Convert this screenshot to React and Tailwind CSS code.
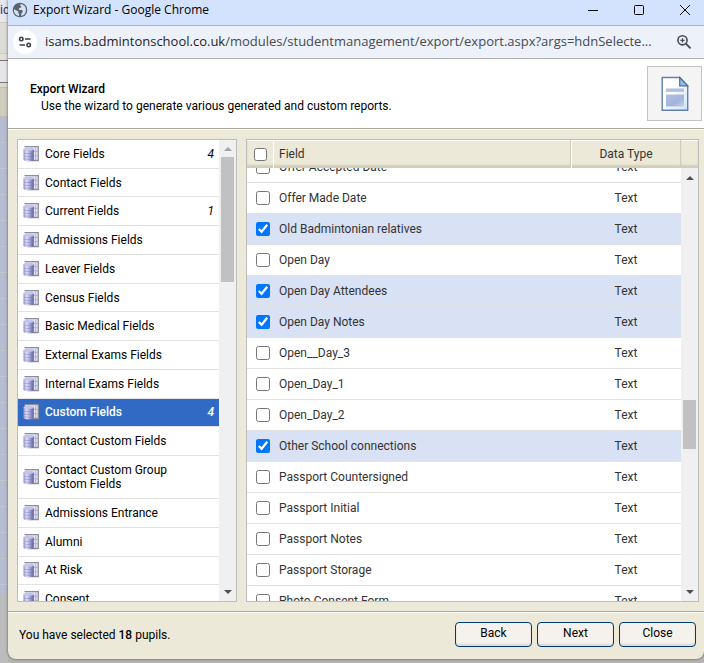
import { useLayoutEffect, useRef, useState } from 'react'

const categories = [
  { name: 'Core Fields', count: 4 },
  { name: 'Contact Fields' },
  { name: 'Current Fields', count: 1 },
  { name: 'Admissions Fields' },
  { name: 'Leaver Fields' },
  { name: 'Census Fields' },
  { name: 'Basic Medical Fields' },
  { name: 'External Exams Fields' },
  { name: 'Internal Exams Fields' },
  { name: 'Custom Fields', count: 4 },
  { name: 'Contact Custom Fields' },
  { name: 'Contact Custom Group Custom Fields', tall: true },
  { name: 'Admissions Entrance' },
  { name: 'Alumni' },
  { name: 'At Risk' },
  { name: 'Consent' },
]

const fields = [
  'Offer Accepted Date',
  'Offer Made Date',
  'Old Badmintonian relatives',
  'Open Day',
  'Open Day Attendees',
  'Open Day Notes',
  'Open__Day_3',
  'Open_Day_1',
  'Open_Day_2',
  'Other School connections',
  'Passport Countersigned',
  'Passport Initial',
  'Passport Notes',
  'Passport Storage',
  'Photo Consent Form',
]

function GlobeIcon() {
  return (
    <svg viewBox="0 0 16 16" className="h-4 w-4 shrink-0" aria-hidden="true">
      <circle cx="8" cy="8" r="7.3" fill="#5f6368" />
      <path
        d="M8.8 2 8 3.4 9.3 4.2 9 5.6 7 6.3 6.8 7.8 10 8 11 9.7 9.6 11 9 13.9A6 6 0 0 0 13.9 8 6 6 0 0 0 8.8 2ZM2 7.2 5 8.8 6.3 9.4 6.2 11 7.2 12 7 14A6 6 0 0 1 2 7.2Z"
        fill="#d3e2fd"
      />
    </svg>
  )
}

function TuneIcon() {
  return (
    <svg viewBox="0 0 14 14" className="h-3.5 w-3.5" fill="none" stroke="#3c4043" strokeWidth="1.6" aria-hidden="true">
      <circle cx="3.3" cy="4" r="1.7" />
      <path d="M7 4h5.5M1.5 10h5.5" />
      <circle cx="10.7" cy="10" r="1.7" />
    </svg>
  )
}

function ZoomIcon() {
  return (
    <svg viewBox="0 0 16 16" className="h-4 w-4" fill="none" stroke="#474a4f" aria-hidden="true">
      <circle cx="6.5" cy="6.3" r="4.6" strokeWidth="1.6" />
      <path d="m9.9 9.7 4.6 4.6" strokeWidth="1.9" />
      <path d="M6.5 4.2v4.2M4.4 6.3h4.2" strokeWidth="1.3" />
    </svg>
  )
}

function DatabaseIcon() {
  return (
    <svg viewBox="0 0 16 16" className="h-4 w-4 shrink-0" aria-hidden="true">
      <defs>
        <linearGradient id="drum">
          <stop offset="0" stopColor="#9a9aca" />
          <stop offset="0.3" stopColor="#dedefa" />
          <stop offset="0.6" stopColor="#a9a9dc" />
          <stop offset="1" stopColor="#5c5c98" />
        </linearGradient>
      </defs>
      <path d="M1.5 .7h13.8v13.8H8" fill="#e6e6fb" stroke="#8e8e98" strokeWidth="1.3" />
      <path d="M12.7 1.5v12.5M10 5.3h5M10 9.8h5" stroke="#b0b0cc" />
      <path d="M.5 3.4C.5 1.8 10.8 1.8 10.8 3.4v10.4c0 2.2-10.3 2.2-10.3 0Z" fill="url(#drum)" />
      <path
        d="M.5 6.6c1 1.3 9.3 1.3 10.3 0M.5 9.5c1 1.3 9.3 1.3 10.3 0M.5 12.3c1 1.3 9.3 1.3 10.3 0"
        fill="none"
        stroke="#7f7fb8"
        strokeWidth="0.5"
      />
      <ellipse cx="5.6" cy="3.4" rx="5" ry="1.3" fill="#c4c4ec" />
    </svg>
  )
}

function DocumentIcon() {
  return (
    <svg viewBox="0 0 28 36" className="h-9 w-7" aria-hidden="true">
      <defs>
        <linearGradient id="sheet" x2="1" y2="1">
          <stop offset="0.4" stopColor="#ffffff" />
          <stop offset="1" stopColor="#cfe3f7" />
        </linearGradient>
        <linearGradient id="block" x2="1" y2="1">
          <stop offset="0" stopColor="#b4bfdf" />
          <stop offset="0.6" stopColor="#a3b4dc" />
          <stop offset="1" stopColor="#c5cdea" />
        </linearGradient>
      </defs>
      <path d="M1.2 1.5h17.5l8 8.4v24.3H1.2Z" fill="url(#sheet)" stroke="#6380ac" strokeWidth="1.4" />
      <path d="M18.7 1.5v8.4h8Z" fill="#8dc0e6" stroke="#4f6f9c" strokeWidth="1.2" />
      <path d="M5 12.5h18v3.4H5Z" fill="#b3bfde" />
      <path d="M5 18.5h18v12H5Z" fill="url(#block)" />
    </svg>
  )
}

function Arrow({ up, color }) {
  return (
    <svg viewBox="0 0 8 4" className="h-1 w-2 shrink-0" fill={color} aria-hidden="true">
      <path d={up ? 'M0 4 4 0l4 4Z' : 'm0 0 4 4 4-4Z'} />
    </svg>
  )
}

function Button({ children }) {
  return (
    <button
      type="button"
      className="h-[25px] w-[77px] rounded-[4px] border border-[#003c74] bg-[#f5f2ee] pb-1 text-center leading-4 shadow-[inset_0_-2px_2px_#dcd8d0]"
    >
      {children}
    </button>
  )
}

// Sliver of the page that sits behind the popup
function PageBehind() {
  return (
    <div className="flex w-2 shrink-0 flex-col overflow-hidden bg-[#bcbcbc] text-xs leading-5 text-[#303060]">
      <div className="h-[22px] shrink-0 bg-[#e7e7ed]">ic</div>
      <div className="h-8 shrink-0 border-y border-[#cfccbc] bg-[#dcdbd6]" />
      <div className="h-1.5 shrink-0 bg-[#e2e0d5]" />
      <div className="h-[23px] shrink-0 border-y border-[#77777b] bg-[#e6e6e8]" />
      <div className="h-1 shrink-0 bg-[#dcdacc]" />
      <div className="h-[30px] shrink-0 border-y border-[#c2bfae] bg-[#d0cdbf]" />
      <div className="h-[476px] shrink-0 bg-[repeating-linear-gradient(#b6bdd3_0_25px,#c3c5cc_25px_26px)]" />
    </div>
  )
}

export default function App() {
  const [active, setActive] = useState('Custom Fields')
  const [checked, setChecked] = useState([
    'Old Badmintonian relatives',
    'Open Day Attendees',
    'Open Day Notes',
    'Other School connections',
  ])
  const scroller = useRef(null)

  useLayoutEffect(() => {
    scroller.current.scrollTop = 16
  }, [])

  const toggle = (name) =>
    setChecked((list) => (list.includes(name) ? list.filter((n) => n !== name) : [...list, name]))

  return (
    <div className="flex h-screen overflow-hidden bg-[#b4b4b4] font-['Roboto',sans-serif] text-[12px] text-black">
      <PageBehind />

      <div className="mb-1 flex min-w-0 flex-1 flex-col overflow-hidden rounded-b-lg bg-[#ece9d8] shadow-[0_0_3px_#555]">
        <div className="flex h-[25px] shrink-0 items-center bg-[#d3e2fd] pb-1.5 pl-1 pr-3.5 font-['Open_Sans',sans-serif]">
          <GlobeIcon />
          <span className="ml-[5px] text-[12px]">Export Wizard - Google Chrome</span>
          <div className="ml-auto flex items-center gap-9">
            <button type="button" aria-label="Minimize">
              <svg viewBox="0 0 10 10" className="h-2.5 w-2.5" stroke="#000"><path d="M0 5.5h10" /></svg>
            </button>
            <button type="button" aria-label="Maximize">
              <svg viewBox="0 0 10 10" className="h-2.5 w-2.5" fill="none" stroke="#000"><rect x=".5" y=".5" width="9" height="9" rx="1" /></svg>
            </button>
            <button type="button" aria-label="Close window">
              <svg viewBox="0 0 10 10" className="h-2.5 w-2.5" stroke="#000"><path d="m0 0 10 10M10 0 0 10" /></svg>
            </button>
          </div>
        </div>

        <div className="flex h-[34px] shrink-0 items-center border-y border-[#aeb0b4] bg-[#edf1fa] pl-[5px] pr-3">
          <button type="button" aria-label="View site information" className="flex h-6 w-6 shrink-0 items-center justify-center rounded-full bg-white">
            <TuneIcon />
          </button>
          <span className="ml-2 min-w-0 flex-1 truncate font-['Open_Sans',sans-serif] text-[13px] text-[#474a4f]">
            <span className="text-[#1f1f1f]">isams.badmintonschool.co.uk</span>
            /modules/studentmanagement/export/export.aspx?args=hdnSelecte...
          </span>
          <button type="button" aria-label="Zoom">
            <ZoomIcon />
          </button>
        </div>

        <header className="flex h-[70px] shrink-0 items-center justify-between border-b border-[#aca899] bg-white pl-[22px] pr-0.5">
          <div className="pt-2 leading-[17px]">
            <h1 className="font-medium">Export Wizard</h1>
            <p className="pl-[11px]">Use the wizard to generate various generated and custom reports.</p>
          </div>
          <div className="flex h-[55px] w-[55px] items-center justify-center border border-[#c3c3c3] bg-[#f4f4f4]">
            <DocumentIcon />
          </div>
        </header>

        <main className="flex min-h-0 flex-1 gap-[9px] border-t border-white py-[9px] pl-[9px] pr-[5px]">
          <nav className="flex w-[220px] shrink-0 overflow-hidden border border-[#bdbdbd] bg-white" aria-label="Field groups">
            <ul className="flex h-[474px] flex-1 flex-col">
              {categories.map(({ name, count, tall }) => (
                <li
                  key={name}
                  className={`flex border-b border-[#e2e2e2] ${tall ? 'h-[43px] shrink-0' : 'min-h-0 flex-1'}`}
                >
                  <button
                    type="button"
                    onClick={() => setActive(name)}
                    className={`flex w-full items-center gap-1.5 px-[5px] text-left leading-[14px] ${
                      name === active ? 'bg-[#316ac5] font-medium text-white' : ''
                    }`}
                  >
                    <DatabaseIcon />
                    <span className="w-[135px]">{name}</span>
                    {count && <span className="ml-auto italic">{count}</span>}
                  </button>
                </li>
              ))}
            </ul>
            <div className="flex w-[17px] shrink-0 flex-col items-center bg-[#f0f0f0] py-[7px]">
              <Arrow up color="#a3a3a3" />
              <div className="mt-1.5 h-[125px] w-[13px] bg-[#c1c1c1]" />
              <div className="flex-1" />
              <Arrow color="#505050" />
            </div>
          </nav>

          <section className="flex min-w-0 flex-1 border border-[#bdbdbd] bg-white">
            <div ref={scroller} className="min-w-0 flex-1 overflow-hidden">
              <table className="w-full table-fixed border-separate border-spacing-0 text-[#333]">
                <thead className="sticky top-0 z-10">
                  <tr className="h-7 bg-[#ece9d8] shadow-[inset_0_1px_0_#fff,inset_0_-3px_2px_#d2cdb9]">
                    <th className="w-[27px] border-r border-white p-0 pl-[7px] text-left">
                      <input type="checkbox" aria-label="Select all" className="block h-[13px] w-[13px]" />
                    </th>
                    <th className="border-r border-[#d0ccb8] p-0 pl-[5px] text-left font-normal">Field</th>
                    <th className="w-[110px] border-l border-r border-l-white border-r-[#d0ccb8] p-0 font-normal">Data Type</th>
                  </tr>
                </thead>
                <tbody>
                  {fields.map((name, i) => {
                    const on = checked.includes(name)
                    return (
                      <tr key={name} className={`h-[31px] ${on ? 'bg-[#d9e1f4]' : 'bg-white'}`}>
                        <td className="border-b border-[#e2e2e2] p-0 pl-[9px]">
                          <input
                            id={`field-${i}`}
                            type="checkbox"
                            checked={on}
                            onChange={() => toggle(name)}
                            className="block h-3.5 w-3.5 accent-[#0075ff]"
                          />
                        </td>
                        <td className="border-b border-[#e2e2e2] p-0 pl-[5px]">
                          <label htmlFor={`field-${i}`}>{name}</label>
                        </td>
                        <td className="border-b border-[#e2e2e2] p-0 text-center">Text</td>
                      </tr>
                    )
                  })}
                </tbody>
              </table>
            </div>
            <div className="flex w-[17px] shrink-0 flex-col items-center bg-[#f0f0f0] pb-[7px]">
              <div className="h-7 w-full shrink-0 bg-[#ece9d8] shadow-[inset_0_1px_0_#fff,inset_0_-3px_2px_#d2cdb9]" />
              <div className="h-2 shrink-0" />
              <Arrow up color="#505050" />
              <div className="flex-[221]" />
              <div className="h-[49px] w-[13px] bg-[#c1c1c1]" />
              <div className="flex-[141]" />
              <Arrow color="#505050" />
            </div>
          </section>
        </main>

        <footer className="flex h-12 shrink-0 items-center justify-between border-t border-[#aca899] pb-0.5 pl-[11px] pr-2 shadow-[inset_0_1px_0_#fff]">
          <p>
            You have selected <b className="font-medium">18</b> pupils.
          </p>
          <div className="flex gap-[5px]">
            <Button>Back</Button>
            <Button>Next</Button>
            <Button>Close</Button>
          </div>
        </footer>
      </div>
    </div>
  )
}
